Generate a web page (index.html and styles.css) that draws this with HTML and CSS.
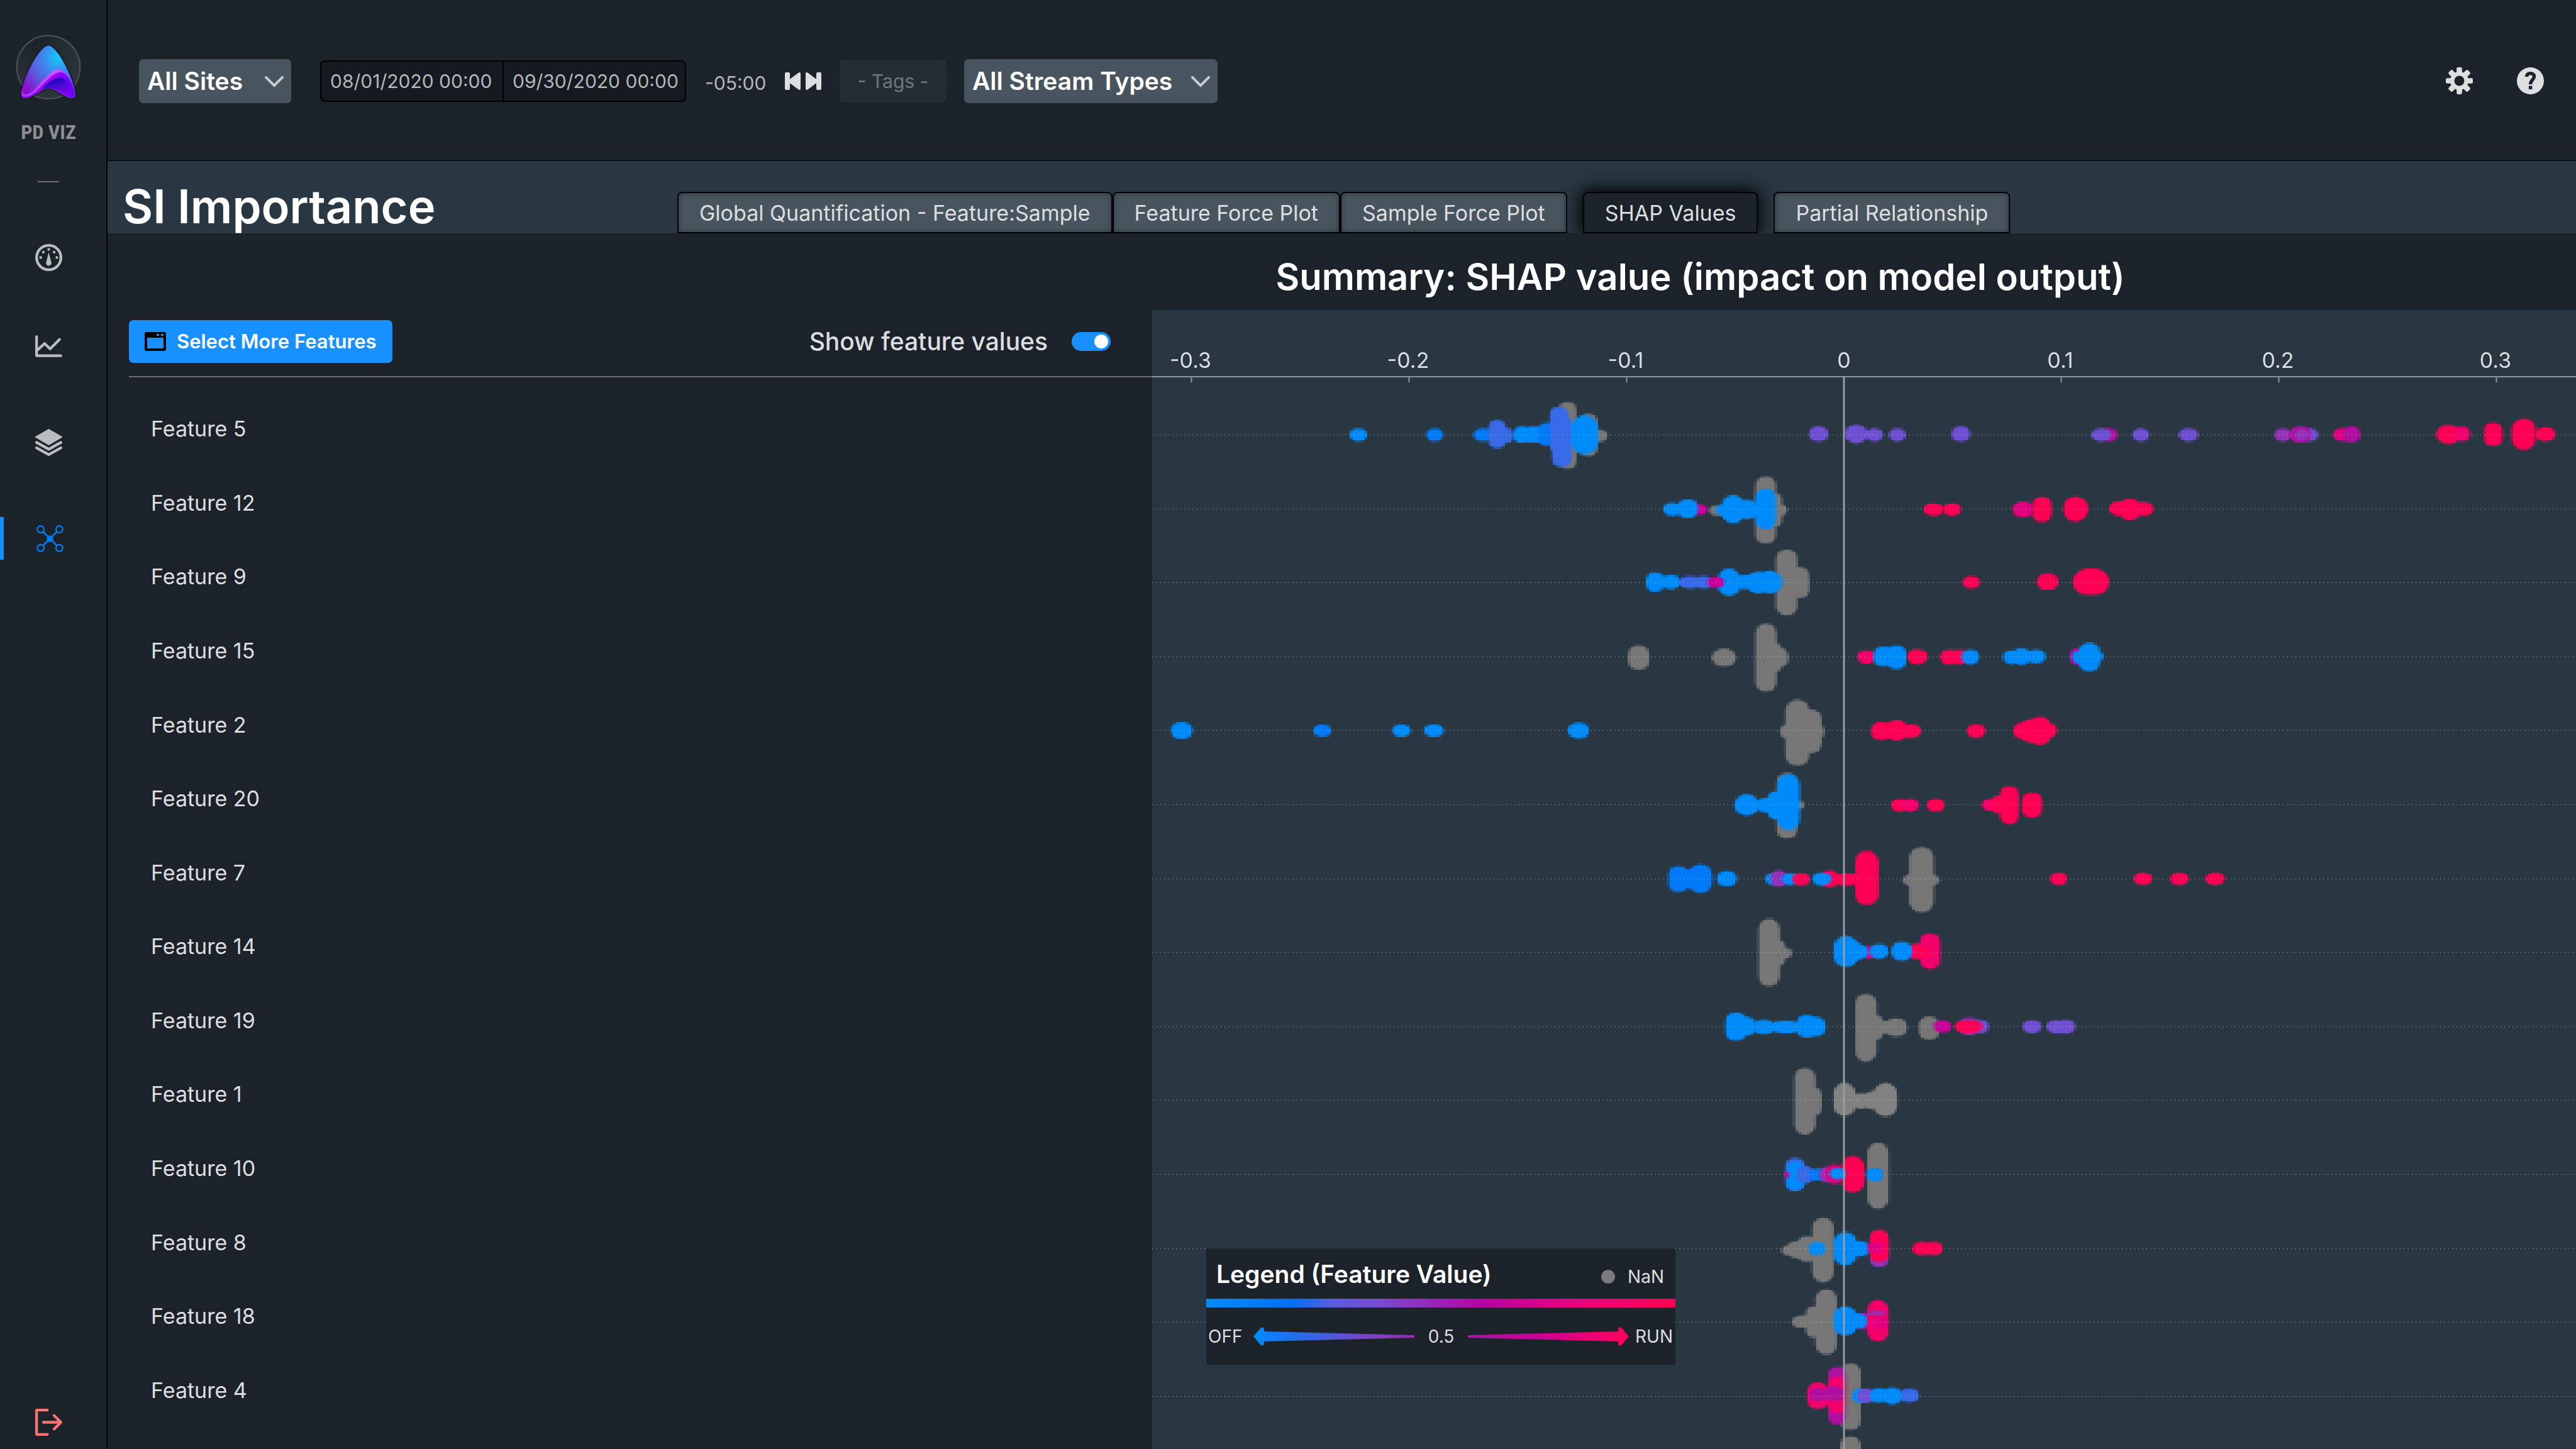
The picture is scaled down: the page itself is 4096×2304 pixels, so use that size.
FILE: index.html
```html
<!DOCTYPE html>
<html lang="en">
<head>
<meta charset="utf-8">
<title>PD VIZ - SI Importance</title>
<link rel="stylesheet" href="styles.css">
</head>
<body>
<div class="app">
  <aside class="sidebar">
    <svg class="logo" viewBox="0 0 684 684" aria-hidden="true">
      <defs>
        <radialGradient id="ring" cx="0.3" cy="0.1" r="0.9"><stop offset="0" stop-color="#1b2229"/><stop offset="0.6" stop-color="#272e35"/><stop offset="1" stop-color="#2e353b"/></radialGradient>
        <radialGradient id="peak" gradientUnits="userSpaceOnUse" cx="430" cy="240" r="430"><stop offset="0" stop-color="#14ccf8"/><stop offset="0.3" stop-color="#3a8cee"/><stop offset="0.55" stop-color="#5a60e0"/><stop offset="1" stop-color="#9400cc"/></radialGradient>
        <linearGradient id="band" x1="0" y1="0" x2="1" y2="0"><stop offset="0" stop-color="#8a00ff"/><stop offset="0.6" stop-color="#a800ff"/><stop offset="1" stop-color="#5c00ff"/></linearGradient>
        <linearGradient id="edge" x1="0" y1="0" x2="1" y2="0"><stop offset="0" stop-color="#a033ff"/><stop offset="0.65" stop-color="#cc5cff"/><stop offset="1" stop-color="#7a28ff"/></linearGradient>
        <linearGradient id="fold" x1="0.3" y1="0" x2="0.9" y2="1"><stop offset="0" stop-color="#1404a8"/><stop offset="0.5" stop-color="#480ad8"/><stop offset="1" stop-color="#9400f0"/></linearGradient>
      </defs>
      <circle cx="342" cy="330" r="282" fill="url(#ring)" stroke="#4b5259" stroke-width="12"/>
      <path d="M342 138C420 138 580 450 580 574C580 596 566 604 548 604C490 604 410 516 342 516C280 516 210 604 134 604C112 604 102 594 102 574C102 450 264 138 342 138Z" fill="url(#peak)" stroke="#191e2d" stroke-width="24" paint-order="stroke"/>
      <path d="M112 545C112 566 126 570 142 570C230 570 340 348 432 348C512 348 580 510 580 574C580 596 566 604 548 604C490 604 410 516 342 516C280 516 210 604 134 604C112 604 102 594 102 574C102 558 106 540 112 520Z" fill="url(#edge)"/>
      <path d="M103 582C110 592 130 594 150 591C250 575 350 376 448 376C520 376 574 520 574 580C572 596 562 600 546 600C490 600 410 516 342 516C280 516 210 604 134 604C115 604 104 596 103 582Z" fill="url(#band)"/>
      <path d="M272 534C320 488 372 423 445 423C505 423 548 520 548 562C548 576 540 582 526 580C450 560 410 516 342 516C316 516 294 524 272 534Z" fill="url(#fold)"/>
    </svg>
    <div class="brand">PD VIZ</div>
    <hr class="rule">
    <nav class="nav" aria-label="Main">
      <div class="nav-overview">
        <a class="nav-link" href="#dashboard" aria-label="Dashboard">
          <svg class="icon" viewBox="0 0 20 20"><circle cx="10" cy="10" r="9" fill="none" stroke="currentColor" stroke-width="2"/><g fill="currentColor"><circle cx="4" cy="10" r="1"/><circle cx="6" cy="6" r="1"/><circle cx="10" cy="4" r="1"/><circle cx="14" cy="6" r="1"/><circle cx="16" cy="10" r="1"/><path d="M10 6L12 13.8C12 15.2 11.2 16 10 16S8 15.2 8 13.8Z"/></g></svg>
        </a>
        <a class="nav-link" href="#trends" aria-label="Trends">
          <svg class="icon" viewBox="0 0 20 20" fill="none" stroke="currentColor" stroke-width="2" stroke-linecap="round" stroke-linejoin="round"><path d="M1 3V17H19"/><path d="M1.500 13L7 8L11 12L18 5"/></svg>
        </a>
      </div>
      <a class="nav-link" href="#layers" aria-label="Layers">
        <svg class="icon" viewBox="0 0 20 20"><g fill="currentColor" stroke="currentColor" stroke-linejoin="round"><path d="M10 .5L19.500 6L10 11.500L.5 6Z"/></g><g fill="none" stroke="currentColor" stroke-width="2" stroke-linecap="round" stroke-linejoin="round"><path d="M1 10L10 15L19 10M1 14L10 19L19 14"/></g></svg>
      </a>
      <a class="nav-link nav-link-active" href="#importance" aria-label="Importance" aria-current="page">
        <svg class="icon icon-graph" viewBox="0 0 20 20"><circle cx="10" cy="10" r="2.500" fill="currentColor"/><g fill="none" stroke="currentColor"><path d="M5 5L15 15M15 5L5 15" stroke-width="1.300"/><g stroke-width="1.100"><circle cx="3.100" cy="3.100" r="2.500"/><circle cx="16.900" cy="3.100" r="2.500"/><circle cx="3.100" cy="16.900" r="2.500"/><circle cx="16.900" cy="16.900" r="2.500"/></g></g></svg>
      </a>
    </nav>
    <a class="logout" href="#logout" aria-label="Log out">
      <svg class="icon" viewBox="0 0 20 20" fill="none" stroke="currentColor" stroke-width="2" stroke-linecap="round" stroke-linejoin="round"><path d="M9 1H1V19H9M6 10H19M14 5L19 10L14 15"/></svg>
    </a>
  </aside>

  <main class="main">
    <header class="header">
      <div class="picker picker-sites">
        <select class="picker-select" aria-label="Sites"><option>All Sites</option></select>
        <svg class="picker-arrow" viewBox="0 0 30 18"><path d="M2 2L15 15L28 2"/></svg>
      </div>
      <div class="dates">
        <input class="date" type="text" value="08/01/2020 00:00" aria-label="Start date">
        <input class="date" type="text" value="09/30/2020 00:00" aria-label="End date">
      </div>
      <span class="zone">-05:00</span>
      <button class="step" type="button" aria-label="Fit range">
        <svg viewBox="0 0 60 30"><g fill="currentColor" stroke="currentColor" stroke-width="4" stroke-linejoin="round"><path d="M3 3H7V27H3Z"/><path d="M8 15L24 3V27Z"/><path d="M53 3H57V27H53Z"/><path d="M52 15L36 3V27Z"/></g></svg>
      </button>
      <input class="tags" type="text" placeholder="- Tags -" aria-label="Tags">
      <div class="picker picker-streams">
        <select class="picker-select" aria-label="Stream types"><option>All Stream Types</option></select>
        <svg class="picker-arrow" viewBox="0 0 30 18"><path d="M2 2L15 15L28 2"/></svg>
      </div>
      <div class="tools">
        <button class="tool" type="button" aria-label="Settings">
          <svg class="icon" viewBox="0 0 20 20"><defs><rect id="tooth" x="8" y="0" width="4" height="5" rx="1"/></defs><circle cx="10" cy="10" r="5.200" fill="none" stroke="currentColor" stroke-width="3"/><g fill="currentColor"><use href="#tooth"/><use href="#tooth" transform="rotate(45 10 10)"/><use href="#tooth" transform="rotate(90 10 10)"/><use href="#tooth" transform="rotate(135 10 10)"/><use href="#tooth" transform="rotate(180 10 10)"/><use href="#tooth" transform="rotate(225 10 10)"/><use href="#tooth" transform="rotate(270 10 10)"/><use href="#tooth" transform="rotate(315 10 10)"/></g></svg>
        </button>
        <button class="tool" type="button" aria-label="Help">
          <svg class="icon" viewBox="0 0 20 20"><circle cx="10" cy="10" r="10" fill="currentColor"/><g class="help-mark"><path d="M7.100 7C7.300 5.300 8.400 4.500 10 4.500C11.700 4.500 12.800 5.400 12.800 6.900C12.800 9 10.050 9.600 10.050 12.500"/><path d="M10.050 13.700V16.300"/></g></svg>
        </button>
      </div>
    </header>

    <section class="band">
      <h1 class="title">SI Importance</h1>
      <div class="tabs" role="tablist">
        <button class="tab" type="button" role="tab">Global Quantification - Feature:Sample</button>
        <button class="tab" type="button" role="tab">Feature Force Plot</button>
        <button class="tab" type="button" role="tab">Sample Force Plot</button>
        <button class="tab tab-active" type="button" role="tab" aria-selected="true">SHAP Values</button>
        <button class="tab" type="button" role="tab">Partial Relationship</button>
      </div>
    </section>

    <h2 class="summary">Summary: SHAP value (impact on model output)</h2>

    <section class="board">
      <div class="features">
        <div class="toolbar">
          <button class="select-more" type="button">
            <svg class="window-icon" viewBox="0 0 34 30"><rect width="34" height="30" rx="3"/><path class="window-hole" d="M4 9H30V26H4ZM19 3H23V6H19ZM26 3H30V6H26Z"/></svg>
            Select More Features
          </button>
          <label class="toggle">Show feature values <input class="switch" type="checkbox" role="switch" checked></label>
        </div>
        <ul class="feature-list">
          <li>Feature 5</li><li>Feature 12</li><li>Feature 9</li><li>Feature 15</li><li>Feature 2</li><li>Feature 20</li><li>Feature 7</li><li>Feature 14</li><li>Feature 19</li><li>Feature 1</li><li>Feature 10</li><li>Feature 8</li><li>Feature 18</li><li>Feature 4</li>
        </ul>
      </div>
      <div class="chart">
        <canvas class="swarm" width="476" height="542"></canvas>
        <svg class="axes" viewBox="0 0 2264 1812" role="img" aria-label="SHAP values by feature">
          <g class="tick-labels">
            <text x="61" y="92">-0.3</text><text x="407" y="92">-0.2</text><text x="753" y="92">-0.1</text><text x="1100" y="92">0</text><text x="1444" y="92">0.1</text><text x="1790" y="92">0.2</text><text x="2136" y="92">0.3</text>
          </g>
          <path class="ticks" d="M0 106H2264M62.500 106V115M408.500 106V115M754.500 106V115M1445.500 106V115M1791.500 106V115M2137.500 106V115"/>
          <g class="guides"></g>
          <path class="zero" d="M1100 106V1812"/>
        </svg>
        <div class="legend">
          <div class="legend-head">
            <h3 class="legend-title">Legend (Feature Value)</h3>
            <span class="nan"><i class="nan-dot"></i>NaN</span>
          </div>
          <div class="ramp"></div>
          <div class="legend-scale">
            <span>OFF</span>
            <svg class="arrow" viewBox="0 0 256 30"><defs><linearGradient id="off"><stop offset="0" stop-color="#008bfb"/><stop offset="0.3" stop-color="#2a6ae8"/><stop offset="0.7" stop-color="#7a44c8"/><stop offset="1" stop-color="#9a28b0"/></linearGradient></defs><path fill="url(#off)" d="M0 15L12 1Q18 -1 17 7L256 13V17L17 23Q18 31 12 29Z"/></svg>
            <span class="legend-middle">0.5</span>
            <svg class="arrow" viewBox="0 0 256 30"><defs><linearGradient id="run"><stop offset="0" stop-color="#a41aa8"/><stop offset="0.4" stop-color="#c40098"/><stop offset="0.8" stop-color="#f00072"/><stop offset="1" stop-color="#ff0058"/></linearGradient></defs><path fill="url(#run)" d="M256 15L244 1Q238 -1 239 7L0 13V17L239 23Q238 31 244 29Z"/></svg>
            <span class="legend-run">RUN</span>
          </div>
        </div>
      </div>
    </section>
  </main>
</div>
<script src="chart.js"></script>
</body>
</html>
```
FILE: styles.css
```css
* { box-sizing: border-box; }
html, body { height: 100%; }
body {
  margin: 0;
  overflow: hidden;
  background: #1b2229;
  color: #dddee0;
  font-family: Inter, "Liberation Sans", sans-serif;
  font-size: 34px;
}
button, input, select { font: inherit; color: inherit; margin: 0; }
button { border: 0; padding: 0; background: none; }
h1, h2, h3, ul, hr { margin: 0; padding: 0; }
a { color: inherit; }

.app { display: flex; height: 100%; }

/* Sidebar */
.sidebar {
  flex: none;
  display: flex;
  flex-direction: column;
  align-items: center;
  width: 171px;
  padding: 48px 15px 21px 0;
  border-right: 2px solid #000;
  color: #babdc0;
}
.logo { flex: none; width: 122px; height: 122px; }
.brand {
  margin-top: 20px;
  font: bold 32px/40px "Roboto Condensed", "Liberation Sans Narrow", Roboto, sans-serif;
  color: #8b8f92;
  white-space: nowrap;
}
.rule { width: 34px; height: 2px; margin: 58px 0 85px; border: 0; background: #707171; }
.nav { display: flex; flex-direction: column; gap: 85px; align-self: stretch; }
.nav-overview { display: flex; flex-direction: column; gap: 73px; }
.nav-link {
  display: flex;
  align-items: center;
  justify-content: center;
  height: 68px;
}
.nav-link-active { border-left: 6px solid #1890ff; padding-right: 2px; color: #007aea; }
.icon { display: block; width: 43px; height: 43px; }
.logout { margin-top: auto; color: #ff7373; }

/* Header */
.main { flex: 1; min-width: 0; display: flex; flex-direction: column; }
.header {
  flex: none;
  display: flex;
  align-items: center;
  gap: 28px;
  height: 256px;
  padding: 2px 51px 0 50px;
  border-bottom: 1px solid #000;
}
.picker { position: relative; }
.picker-sites { width: 242px; }
.picker-streams { width: 403px; }
.picker-select {
  display: block;
  appearance: none;
  width: 100%;
  height: 70px;
  padding: 0 13px;
  border: 0;
  border-radius: 7px;
  background: #48555e;
  color: #fff;
  font-size: 39px;
  font-weight: 600;
}
.picker-arrow {
  position: absolute;
  top: 27px;
  right: 12px;
  width: 30px;
  height: 18px;
  fill: none;
  stroke: #c8cccf;
  stroke-width: 4;
  stroke-linecap: round;
  pointer-events: none;
}
.dates {
  display: flex;
  width: 582px;
  height: 66px;
  margin-left: 18px;
  border: 2px solid #000;
  border-radius: 7px;
  background: #141a20;
}
.date {
  flex: 1;
  min-width: 0;
  padding: 0 0 0 14px;
  border: 0;
  background: none;
  color: #b4b7ba;
  font-size: 30px;
}
.date + .date { border-left: 2px solid #000; }
.zone { width: 98px; margin-left: 2px; padding-top: 6px; color: #b4b7ba; font-size: 30px; white-space: nowrap; }
.step { display: block; width: 60px; height: 30px; color: #dddee0; }
.step svg { display: block; }
.tags {
  width: 170px;
  height: 68px;
  padding: 0;
  border: 0;
  border-radius: 6px;
  background: #252d34;
  font-size: 30px;
  text-align: center;
}
.tags::placeholder { color: #72777c; opacity: 1; }
.tools { display: flex; gap: 70px; margin-left: auto; }
.help-mark { fill: none; stroke: #1b2229; stroke-width: 2.5; }

/* Page title and tabs */
.band {
  flex: none;
  display: flex;
  align-items: flex-end;
  height: 115px;
  padding-left: 24px;
  background: #293742;
}
.title { width: 882px; color: #fff; font-size: 74px; font-weight: 600; line-height: 86px; white-space: nowrap; }
.tabs { display: flex; }
.tab {
  height: 66px;
  padding: 0 33px;
  border: 2px solid #000;
  border-radius: 8px 8px 0 0;
  background: #48555e;
  box-shadow: inset 0 0 8px #2c363e;
  white-space: nowrap;
}
.tab-active { margin: 0 25px; background: #1b2229; box-shadow: 0 0 26px 4px #000; clip-path: inset(-40px -40px 0 -40px); }

.summary {
  flex: none;
  height: 122px;
  padding-left: 1140px;
  color: #fff;
  font-size: 58px;
  font-weight: 600;
  line-height: 138px;
  text-align: center;
  white-space: nowrap;
}

/* Features and chart */
.board { flex: 1; min-height: 0; display: grid; grid-template-columns: 1661fr 2264fr; }
.features { display: flex; flex-direction: column; min-height: 0; padding-left: 34px; }
.toolbar {
  flex: none;
  display: flex;
  align-items: center;
  justify-content: space-between;
  height: 107px;
  padding: 0 66px 6px 0;
  border-bottom: 2px solid #707171;
}
.select-more {
  display: flex;
  align-items: center;
  gap: 17px;
  height: 68px;
  padding: 0 25px;
  border-radius: 7px;
  background: #1890ff;
  color: #fff;
  font-size: 31px;
  font-weight: 600;
}
.window-icon { width: 34px; height: 30px; }
.window-hole { fill: #1890ff; }
.toggle { display: flex; align-items: center; gap: 38px; font-size: 39px; font-weight: 500; }
.switch {
  appearance: none;
  width: 62px;
  height: 30px;
  padding: 4px;
  border-radius: 15px;
  background: #1890ff;
}
.switch::before { content: ""; display: block; width: 22px; height: 22px; border-radius: 50%; background: #fff; }
.switch:checked::before { margin-left: auto; }
.feature-list {
  flex: 1;
  display: flex;
  flex-direction: column;
  padding: 23px 0 35px 35px;
  list-style: none;
}
.feature-list li { flex: 1; display: flex; align-items: center; }

.chart { position: relative; min-height: 0; overflow: hidden; background: #293742; }
.swarm, .axes { display: block; width: 100%; aspect-ratio: 2264 / 1812; }
.swarm { image-rendering: pixelated; }
.axes { position: absolute; top: 0; left: 0; }
.tick-labels { fill: #dddee0; font-size: 34px; text-anchor: middle; dominant-baseline: auto; }
.ticks { fill: none; stroke: #90979b; stroke-width: 2; }
.guides { fill: none; stroke: #fff; stroke-opacity: .65; stroke-width: 1; stroke-dasharray: 1 5.4; }
.zero { stroke: #999c9e; stroke-width: 3; }

.legend {
  position: absolute;
  left: 86px;
  bottom: 134px;
  width: 746px;
  background: #1b2229;
}
.legend-head { display: flex; justify-content: space-between; align-items: center; height: 80px; padding: 0 18px 0 16px; }
.legend-title { color: #fff; font-size: 39px; font-weight: 600; }
.nan { display: flex; align-items: center; gap: 20px; padding-top: 10px; font-size: 28px; }
.nan-dot { width: 22px; height: 22px; border-radius: 50%; background: #7a7a7a; }
.ramp { height: 14px; background: linear-gradient(90deg, #008bfb, #0070f2 18%, #5a5ce0 27%, #7a4bd0 37%, #b800a0 60%, #e80080 78%, #ff0051); }
.legend-scale {
  display: grid;
  grid-template-columns: 72px 256px 1fr 256px 70px;
  align-items: center;
  height: 91px;
  padding: 0 4px 0 3px;
  font-size: 28px;
}
.legend-middle { text-align: center; }
.legend-run { text-align: right; }
.arrow { width: 256px; height: 30px; }
```
FILE: chart.js
```js
// Colours run from OFF (blue) to RUN (red); g and h are missing values.
const colours = {
  g: '#777777', h: '#828282', B: '#008bfb', b: '#007af7', I: '#386ae8', P: '#7050d2',
  V: '#9233b8', M: '#b0109f', m: '#c8009a', q: '#e3007f', r: '#f2006c', R: '#ff0055'
};

// One line per feature, top to bottom: colour, left, right, extent above and below the guide.
const rows = [
  'g 646 675 52 54;g 679 708 33 34;g 700 724 8 12;B 314 342 10 11;b 436 463 10 11;b 511 542 10 11;I 535 563 23 22;I 553 574 11 13;B 574 603 13 13;B 590 625 13 13;b 614 643 19 18;I 632 662 44 30;I 636 667 30 52;B 666 709 31 32;P 1045 1075 13 11;P 1101 1138 16 14;P 1135 1162 10 11;P 1172 1198 10 11;P 1271 1301 13 11;M 1509 1535 10 11;P 1494 1525 10 11;P 1559 1585 10 11;P 1633 1663 10 11;V 1785 1812 10 11;P 1828 1854 10 11;M 1809 1843 13 13;V 1817 1839 9 9;q 1878 1906 10 11;M 1893 1921 13 13;R 2042 2080 16 15;r 2069 2095 13 11;R 2118 2147 19 18;R 2162 2200 26 24;R 2200 2231 12 11',
  'g 959 992 51 55;g 975 1001 26 29;g 986 1010 8 11;g 886 914 6 11;m 857 883 8 10;B 813 841 10 11;B 835 868 15 15;B 896 925 8 11;B 906 942 22 23;B 930 962 14 17;B 959 992 32 32;R 1227 1258 9 11;R 1258 1286 9 11;q 1368 1401 12 13;R 1400 1430 19 21;R 1449 1488 20 20;R 1522 1550 12 11;R 1539 1570 16 18;R 1561 1592 11 11',
  'g 992 1026 52 53;g 1012 1045 24 25;B 785 814 16 15;B 808 841 12 11;I 838 873 10 10;I 862 892 10 10;B 899 936 22 22;B 926 960 12 11;B 944 985 18 18;B 962 1002 19 18;m 883 910 9 9;R 1289 1316 10 10;R 1407 1441 14 12;R 1464 1522 22 20',
  'g 757 790 18 21;g 890 929 13 16;g 959 993 52 56;g 975 1001 23 25;g 980 1012 14 17;r 1122 1150 10 11;B 1147 1178 16 16;B 1168 1199 18 20;R 1201 1233 12 12;R 1253 1282 11 12;R 1268 1298 11 12;B 1287 1315 11 12;B 1353 1382 10 12;B 1368 1396 14 13;B 1390 1421 11 11;M 1459 1485 14 13;B 1463 1491 10 12;B 1474 1507 22 23;B 1488 1512 9 9',
  'B 30 64 13 14;b 256 285 9 11;B 382 411 9 11;B 432 464 9 11;B 661 695 12 13;g 1007 1045 49 57;g 1030 1065 33 37;g 998 1024 9 14;g 1045 1069 9 14;R 1143 1178 13 16;R 1168 1200 16 17;R 1190 1223 9 12;R 1296 1325 9 12;R 1369 1403 12 14;R 1378 1418 18 20;R 1396 1428 21 24;R 1410 1439 11 12',
  'g 993 1026 50 54;g 1011 1037 6 9;B 926 965 16 18;B 960 992 10 13;B 978 1008 21 24;B 994 1030 48 41;R 1175 1202 9 11;r 1191 1219 9 11;R 1232 1260 9 11;r 1320 1347 9 10;R 1332 1363 14 15;R 1348 1378 29 31;R 1383 1415 19 21',
  'b 821 852 20 21;b 843 864 15 17;b 853 891 23 23;B 898 930 12 12;B 975 1002 9 10;V 983 1010 13 13;B 1001 1028 9 10;R 1018 1046 9 11;R 1064 1091 13 14;B 1050 1080 10 11;R 1083 1126 9 11;R 1118 1155 44 42;g 1204 1243 51 54;g 1193 1252 9 14;R 1428 1455 10 10;R 1561 1590 10 10;R 1619 1648 10 10;R 1675 1705 10 10',
  'g 964 998 53 54;g 978 1007 20 22;g 988 1018 7 10;q 1128 1154 10 10;B 1084 1122 26 24;B 1096 1132 18 16;B 1115 1139 11 10;B 1141 1171 13 10;R 1200 1235 14 11;r 1221 1253 30 27;R 1212 1238 10 9;B 1175 1209 16 14',
  'B 912 945 22 23;B 932 960 15 15;B 956 989 11 13;B 982 1032 9 11;B 1025 1057 18 18;B 1040 1071 15 16;g 1118 1152 52 56;g 1135 1162 18 22;g 1150 1185 9 12;g 1166 1200 13 16;g 1219 1252 16 21;m 1243 1271 10 10;V 1282 1316 14 14;P 1301 1330 11 11;R 1276 1321 10 11;P 1384 1414 10 11;P 1422 1452 10 11;P 1436 1468 11 12',
  'g 1021 1055 51 55;g 1036 1065 20 25;h 1084 1118 27 26;h 1105 1150 11 14;h 1131 1162 14 15;h 1147 1185 27 26',
  'g 1137 1171 50 55;B 1135 1162 10 11;I 1007 1038 26 27;B 1009 1037 20 26;M 1005 1014 4 6;I 1025 1052 13 15;b 1045 1073 9 10;V 1060 1087 12 13;q 1071 1098 15 16;R 1096 1133 28 29;B 1077 1104 10 8',
  'g 1050 1084 49 54;g 1001 1030 6 12;g 1010 1040 12 16;g 1026 1058 19 22;B 1044 1071 10 11;B 1084 1120 26 27;B 1108 1141 12 13;V 1141 1171 26 30;R 1141 1171 29 22;q 1137 1164 10 8;R 1209 1239 10 11;R 1228 1257 10 11',
  'g 1055 1089 52 52;g 1039 1066 25 25;g 1017 1055 10 9;M 1116 1145 15 12;B 1084 1120 25 22;B 1107 1137 14 11;r 1137 1171 35 31;V 1135 1168 17 -11;q 1143 1171 10 12',
  'g 1094 1127 52 53;g 1110 1133 12 13;M 1075 1104 47 45;r 1075 1104 31 27;r 1041 1077 22 21;M 1045 1072 13 8;M 1068 1100 16 8;B 1113 1141 12 11;P 1122 1148 12 11;I 1188 1219 12 10;B 1141 1170 13 11;B 1162 1192 14 13',
  'g 1094 1127 53 53'
];

const firstGuide = 198;
const guideStep = 117.6;
const cellWidth = 2264 / 476;
const cellHeight = 1812 / 542;
const context = document.querySelector('.swarm').getContext('2d');
const guides = document.querySelector('.guides');

rows.forEach((row, index) => {
  const y = Math.round(firstGuide + guideStep * index);
  const line = document.createElementNS('http://www.w3.org/2000/svg', 'path');
  line.setAttribute('d', `M0 ${y + 0.5}H2264`);
  guides.append(line);
  for (const mark of row.split(';')) {
    const [key, ...size] = mark.split(' ');
    const [left, right, above, below] = size.map(Number);
    const width = (right - left) / cellWidth;
    const height = (above + below) / cellHeight;
    const radius = { x: Math.min(width / 2, 5), y: Math.min(height / 2, width * 0.65) };
    context.fillStyle = colours[key];
    context.beginPath();
    context.roundRect(left / cellWidth, (y - above) / cellHeight, width, height, radius);
    context.fill();
  }
});
```
